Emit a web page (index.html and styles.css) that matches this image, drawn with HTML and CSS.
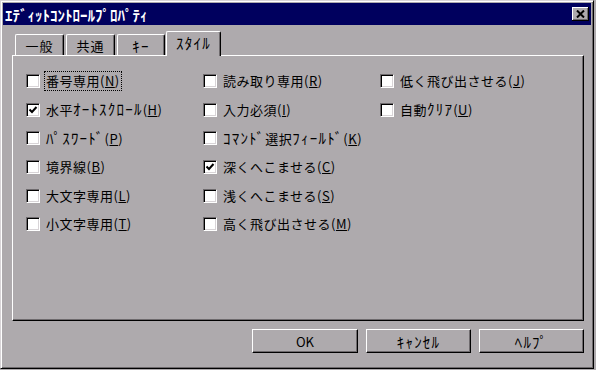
FILE: index.html
```
<!DOCTYPE html>
<html lang="ja">
<head>
<meta charset="utf-8">
<title>ｴﾃﾞｨｯﾄｺﾝﾄﾛｰﾙﾌﾟﾛﾊﾟﾃｨ</title>
<link rel="stylesheet" href="styles.css">
</head>
<body>
<div class="window">
  <div class="titlebar">
    <span class="title">ｴﾃﾞｨｯﾄｺﾝﾄﾛｰﾙﾌﾟﾛﾊﾟﾃｨ</span>
    <span class="close"><svg width="9" height="8" viewBox="0 0 9 8"><path d="M1 0.5 L8 7.5 M8 0.5 L1 7.5" stroke="#000" stroke-width="2" fill="none"/></svg></span>
  </div>
  <div class="content">
    <div class="tabs">
      <div class="tab t1">一般</div>
      <div class="tab t2">共通</div>
      <div class="tab t3"><span class="hw">ｷｰ</span></div>
      <div class="tab sel"><span class="hw">ｽﾀｲﾙ</span></div>
    </div>
    <div class="panel">
      <div class="grid">
        <div class="item"><span class="cb"></span><span class="lbl focus">番号専用(<u>N</u>)</span></div>
        <div class="item"><span class="cb"><svg width="10" height="10" viewBox="0 0 10 10"><path d="M1.5 4.5 L4 7 L8.5 2" stroke="#000" stroke-width="2" fill="none"/></svg></span><span class="lbl">水平<span class="hw">ｵｰﾄｽｸﾛｰﾙ</span>(<u>H</u>)</span></div>
        <div class="item"><span class="cb"></span><span class="lbl"><span class="hw">ﾊﾟｽﾜｰﾄﾞ</span>(<u>P</u>)</span></div>
        <div class="item"><span class="cb"></span><span class="lbl">境界線(<u>B</u>)</span></div>
        <div class="item"><span class="cb"></span><span class="lbl">大文字専用(<u>L</u>)</span></div>
        <div class="item"><span class="cb"></span><span class="lbl">小文字専用(<u>T</u>)</span></div>

        <div class="item"><span class="cb"></span><span class="lbl">読み取り専用(<u>R</u>)</span></div>
        <div class="item"><span class="cb"></span><span class="lbl">入力必須(<u>I</u>)</span></div>
        <div class="item"><span class="cb"></span><span class="lbl"><span class="hw">ｺﾏﾝﾄﾞ</span>選択<span class="hw">ﾌｨｰﾙﾄﾞ</span>(<u>K</u>)</span></div>
        <div class="item"><span class="cb"><svg width="10" height="10" viewBox="0 0 10 10"><path d="M1.5 4.5 L4 7 L8.5 2" stroke="#000" stroke-width="2" fill="none"/></svg></span><span class="lbl">深くへこませる(<u>C</u>)</span></div>
        <div class="item"><span class="cb"></span><span class="lbl">浅くへこませる(<u>S</u>)</span></div>
        <div class="item"><span class="cb"></span><span class="lbl">高く飛び出させる(<u>M</u>)</span></div>

        <div class="item"><span class="cb"></span><span class="lbl">低く飛び出させる(<u>J</u>)</span></div>
        <div class="item"><span class="cb"></span><span class="lbl">自動<span class="hw">ｸﾘｱ</span>(<u>U</u>)</span></div>
      </div>
    </div>
    <div class="buttons">
      <div class="btn b1">OK</div>
      <div class="btn"><span class="hw">ｷｬﾝｾﾙ</span></div>
      <div class="btn"><span class="hw">ﾍﾙﾌﾟ</span></div>
    </div>
  </div>
</div>
</body>
</html>
```
FILE: styles.css
```
* { box-sizing: border-box; }
body {
  margin: 0;
  background: #aeaaad;
  font-family: "Noto Sans CJK JP", "Noto Sans", sans-serif;
  font-size: 13px;
  color: #000;
}
.window {
  width: 594px;
  height: 369px;
  background: #aeaaad;
  border: 1px solid;
  border-color: #d8d4d7 #000 #000 #d8d4d7;
  box-shadow: inset 1px 1px #fff, inset -1px -1px #6e6a6d;
  padding: 2px;
}
.titlebar {
  height: 22px;
  background: #00005e;
  color: #fff;
  display: flex;
  align-items: center;
  justify-content: space-between;
  padding: 0 2px 0 2px;
}
.title {
  font-size: 15px;
  font-weight: bold;
  letter-spacing: 0;
  line-height: 1;
}
.close {
  width: 17px;
  height: 14px;
  background: #aeaaad;
  box-shadow: inset -1px -1px #000, inset 1px 1px #fff, inset -2px -2px #6e6a6d;
  display: flex;
  align-items: center;
  justify-content: center;
  padding-bottom: 1px;
}
.content {
  padding: 6px 7px 0 9px;
}
.tabs {
  display: flex;
  align-items: flex-end;
  height: 24px;
  position: relative;
  z-index: 2;
}
.tab {
  height: 21px;
  background: #aeaaad;
  border-top: 1px solid #fff;
  border-left: 1px solid #fff;
  border-right: 1px solid #000;
  border-radius: 2px 2px 0 0;
  box-shadow: inset -1px 0 #6e6a6d;
  display: flex;
  align-items: center;
  justify-content: center;
  line-height: 1;
  letter-spacing: 1px;
}
.t1 { margin-left: 3px; width: 49px; }
.t2 { margin-left: 2px; width: 49px; }
.t3 { margin-left: 2px; width: 48px; }
.sel {
  margin-left: 1px;
  width: 55px;
  height: 25px;
  margin-bottom: -1px;
  padding-bottom: 3px;
}
.hw {
  font-size: 15px;
  letter-spacing: 1.2px;
  line-height: 1;
}
.panel {
  height: 266px;
  border-top: 1px solid #fff;
  border-left: 1px solid #fff;
  border-right: 1px solid #000;
  border-bottom: 1px solid #000;
  box-shadow: inset -1px -1px #6e6a6d;
  padding: 11px 0 0 13px;
}
.grid {
  display: grid;
  grid-template-columns: repeat(3, 177px);
  grid-template-rows: repeat(6, 28.6px);
  grid-auto-flow: column;
}
.item {
  display: flex;
  align-items: center;
}
.cb {
  width: 14px;
  height: 14px;
  flex: none;
  background: #fff;
  border-top: 1px solid #6e6a6d;
  border-left: 1px solid #6e6a6d;
  border-right: 1px solid #fff;
  border-bottom: 1px solid #fff;
  box-shadow: inset 1px 1px #000, inset -1px -1px #d8d4d7;
  display: flex;
  align-items: center;
  justify-content: center;
}
.lbl {
  margin-left: 6px;
  line-height: 16px;
  letter-spacing: 0.5px;
  white-space: nowrap;
}
.lbl u { text-decoration-thickness: 1px; text-underline-offset: 1px; }
.focus {
  outline: 1px dotted #000;
  outline-offset: 1px;
}
.buttons {
  display: flex;
  justify-content: flex-end;
  gap: 8px;
  margin-top: 8px;
}
.btn {
  width: 105px;
  height: 24px;
  background: #aeaaad;
  border-top: 1px solid #fff;
  border-left: 1px solid #fff;
  border-right: 1px solid #000;
  border-bottom: 1px solid #000;
  box-shadow: inset -1px -1px #6e6a6d;
  display: flex;
  align-items: center;
  justify-content: center;
  line-height: 1;
}
.b1 { width: 106px; }
```
